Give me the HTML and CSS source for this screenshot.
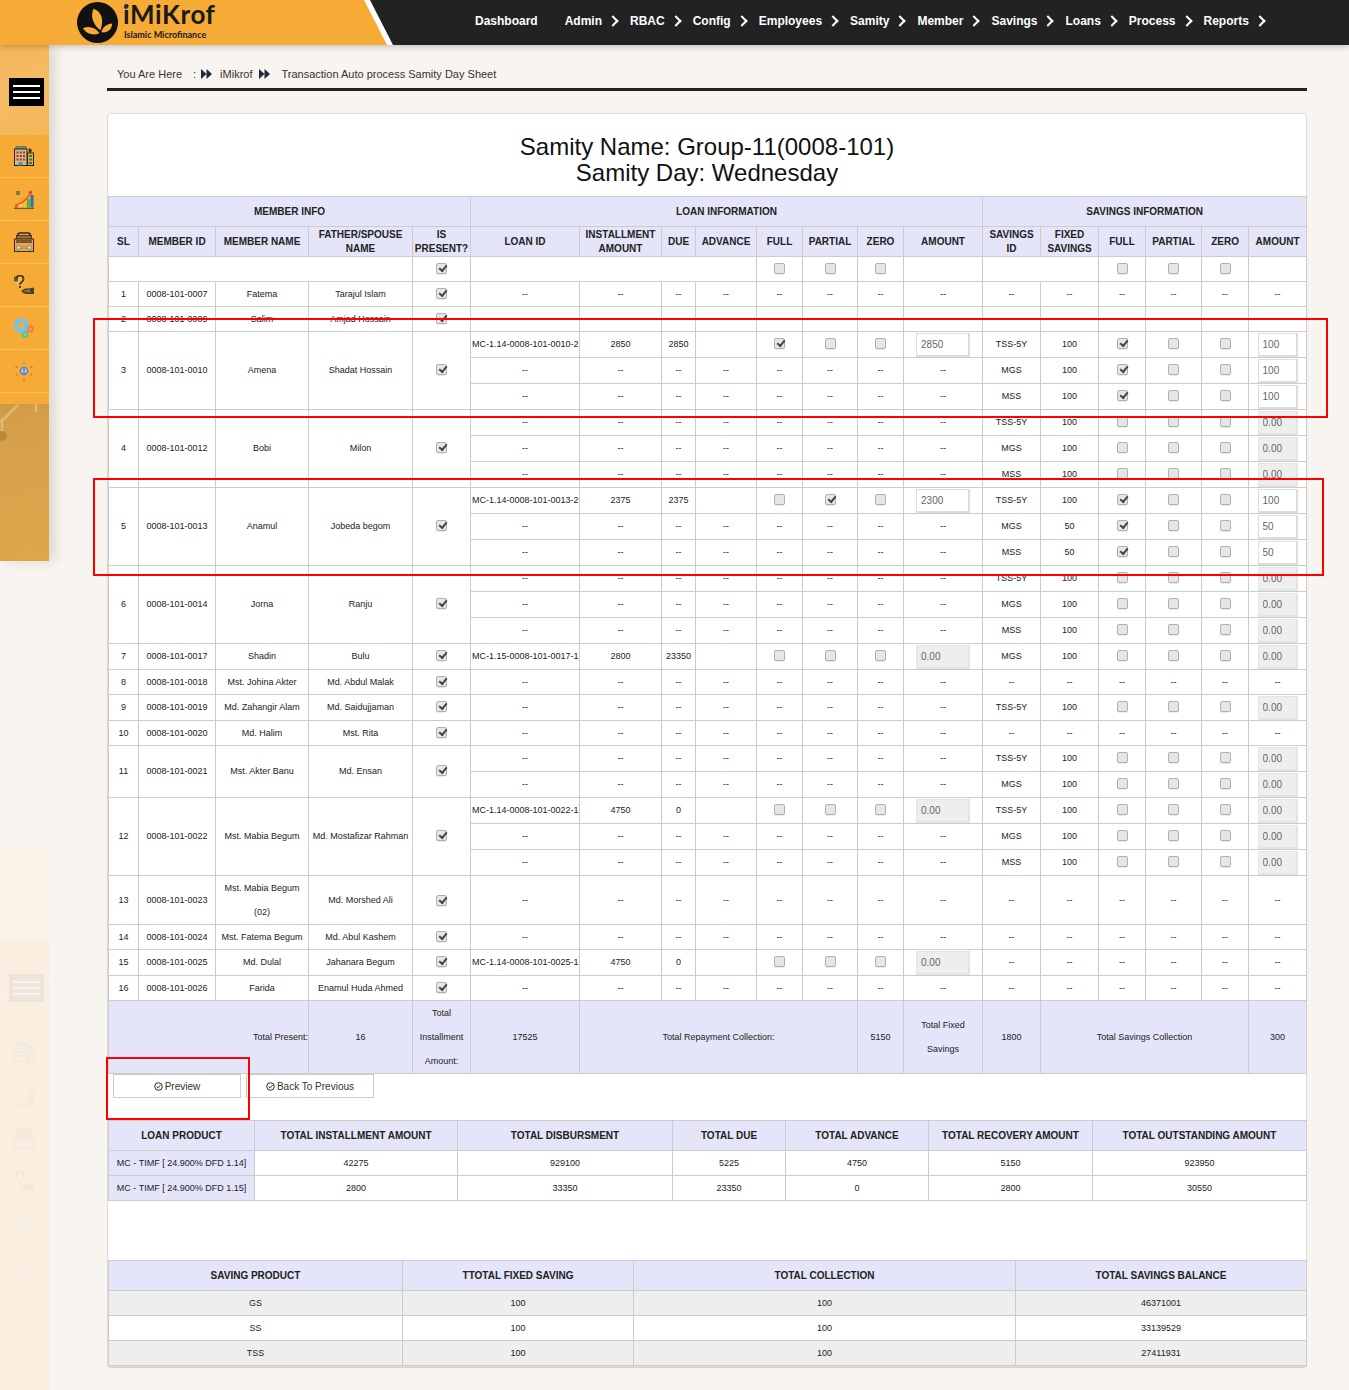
FILE: index.html
```html
<!DOCTYPE html>
<html lang="en">
<head>
  <meta charset="UTF-8">
  <title>Transaction Auto process Samity Day Sheet</title>
  <link rel="stylesheet" href="styles.css">
</head>
<body>
  <svg class="defs" width="0" height="0">
    <symbol id="i-building" viewBox="0 0 20 20">
      <rect x="2" y="0.5" width="10" height="3" fill="#2fa7a0" stroke="#a33" stroke-width=".6"/>
      <rect x="0.5" y="3" width="12.5" height="16.5" fill="#e4b183" stroke="#222"/>
      <path d="M2.5 5.5h2v2h-2zM5.8 5.5h2v2h-2zM9 5.5h2v2H9zM2.5 9h2v2h-2zM5.8 9h2v2h-2zM9 9h2v2H9zM2.5 12.5h2v2h-2zM5.8 12.5h2v2h-2zM9 12.5h2v2H9z" fill="#7a4a3a"/>
      <path d="M4.5 16h4v3.5h-4z" fill="#2fa7a0"/>
      <rect x="13.5" y="7" width="6" height="12.5" fill="#dcb43a" stroke="#222"/>
      <path d="M15 9h3v2h-3zM15 12.5h3v2h-3zM15 16h3v2h-3z" fill="#3c6e5a"/>
      <path d="M15 2l3 2-1 2.5h-2.500z" fill="#3a2c2c"/>
    </symbol>
    <symbol id="i-chart" viewBox="0 0 20 20">
      <rect x="2" y="2" width="4" height="4" fill="#8a7448"/>
      <path d="M1 16.500h2.500v2H1z" fill="#e53935"/>
      <rect x="5" y="15" width="3" height="3.500" fill="#f7d64a"/>
      <rect x="9" y="12.500" width="3" height="6" fill="#f2c230"/>
      <rect x="13" y="10" width="3" height="8.500" fill="#4caf50"/>
      <rect x="16.500" y="6" width="3" height="12.500" fill="#1e78b4"/>
      <path d="M1.500 16c6-1 11-5 15-12" fill="none" stroke="#e53935" stroke-width="1.200"/>
      <path d="M14 3l4-1.500-.3 4.500z" fill="#e53935"/>
      <rect y="18.800" width="20" height="1.200" fill="#6d5a36"/>
    </symbol>
    <symbol id="i-toolbox" viewBox="0 0 20 20">
      <path d="M4 6V2.500C4 1.500 5 1 6 1h8c1 0 2 .5 2 1.500V6" fill="none" stroke="#2b2b2b" stroke-width="1.500"/>
      <rect x="2.500" y="3.500" width="15" height="5" fill="#a0683a" stroke="#2b2b2b" stroke-width=".8"/>
      <rect x="0.500" y="7" width="19" height="12.500" fill="#e8a83c" stroke="#2b2b2b"/>
      <rect x="2" y="7.500" width="16" height="3.500" fill="#7e5230"/>
      <path d="M3 13.500h2l1 1.500h8l1-1.500h2v4h-2l-1-1.500H6l-1 1.500H3z" fill="#dfe3e8" stroke="#555" stroke-width=".5"/>
    </symbol>
    <symbol id="i-hands" viewBox="0 0 20 20">
      <circle cx="6" cy="5" r="5.500" fill="#f2bc4e"/>
      <path d="M0 1.500h4v5H0z" fill="#6b5a34"/>
      <path d="M2.500 4a3.500 3.500 0 1 1 5.300 3c-1.500.9-1.800 1.400-1.800 2.800" fill="none" stroke="#4a3c22" stroke-width="2"/>
      <rect x="5" y="11" width="2" height="2" fill="#4a3c22"/>
      <path d="M7 16l4-2.500h3l6-1V19h-7l-3-.5z" fill="#4e4226"/>
      <path d="M10.500 16h4M15 14.500v3" stroke="#e8c88a" stroke-width=".7"/>
    </symbol>
    <symbol id="i-gears" viewBox="0 0 20 20">
      <circle cx="7" cy="7.500" r="5" fill="none" stroke="#6cc5f2" stroke-width="3.500"/>
      <circle cx="7" cy="7.500" r="7" fill="none" stroke="#6cc5f2" stroke-width="1.500" stroke-dasharray="2.200 1.500"/>
      <circle cx="16.500" cy="11" r="2.500" fill="none" stroke="#f4775a" stroke-width="1.800"/>
      <circle cx="11" cy="16.500" r="2.500" fill="none" stroke="#3dcab4" stroke-width="1.800"/>
    </symbol>
    <symbol id="i-team" viewBox="0 0 20 20">
      <circle cx="10" cy="10" r="3.600" fill="#f6c9a0" stroke="#3b87e0" stroke-width="1.500"/>
      <path d="M8 12.500a2 2 0 0 1 4 0zM8.700 8.800a1.300 1.300 0 1 0 2.600 0 1.300 1.300 0 0 0-2.600 0z" fill="#3b87e0"/>
      <path d="M8.500 3l1.500-2.500L11.500 3zM8.500 19.500l1.500-2.500 1.500 2.500z" fill="#f2665a"/>
      <path d="M1 7l1.500-2.500L4 7zM16 7l1.500-2.500L19 7zM1 14.500L2.500 12 4 14.500zM16 14.500l1.500-2.500 1.500 2.500z" fill="#f2665a"/>
    </symbol>
    <symbol id="i-forward" viewBox="0 0 11 10">
      <path d="M0 0l5.500 5L0 10zM5.500 0L11 5l-5.500 5z" fill="#1f2a3a"/>
    </symbol>
    <symbol id="i-check" viewBox="0 0 10 10">
      <circle cx="5" cy="5" r="4.200" fill="none" stroke="#222" stroke-width="1.100"/>
      <path d="M2.900 5l1.600 1.500 2.700-3" fill="none" stroke="#222" stroke-width="1.100"/>
    </symbol>
  </svg>

  <header class="topbar">
    <div class="brand">
      <div class="brand-in">
        <svg class="logo" viewBox="0 0 42 42">
          <circle cx="21" cy="21" r="21" fill="#111"/>
          <path d="M17 7c8 3 11 11 7 22C17 24 13 15 17 7z" fill="#f5ab35"/>
          <path d="M6 27c6-3 13-1 17 5-6 3-13 1-17-5zM25 31c1-5 6-9 11-9 0 6-5 10-11 9z" fill="#f5ab35"/>
        </svg>
        <div class="brand-text">
          <div class="brand-name">iMiKrof</div>
          <div class="brand-sub">Islamic Microfinance</div>
        </div>
      </div>
    </div>
    <nav class="nav">
      <a class="nav-first">Dashboard</a>
      <a class="sub">Admin</a>
      <a class="sub">RBAC</a>
      <a class="sub">Config</a>
      <a class="sub">Employees</a>
      <a class="sub">Samity</a>
      <a class="sub">Member</a>
      <a class="sub">Savings</a>
      <a class="sub">Loans</a>
      <a class="sub">Process</a>
      <a class="sub">Reports</a>
    </nav>
  </header>

  <aside class="side">
    <div class="side-top"><div class="burger"><span></span><span></span><span></span></div></div>
    <div class="side-item"><svg class="side-icon"><use href="#i-building"/></svg></div>
    <div class="side-item"><svg class="side-icon"><use href="#i-chart"/></svg></div>
    <div class="side-item"><svg class="side-icon"><use href="#i-toolbox"/></svg></div>
    <div class="side-item"><svg class="side-icon"><use href="#i-hands"/></svg></div>
    <div class="side-item"><svg class="side-icon"><use href="#i-gears"/></svg></div>
    <div class="side-item"><svg class="side-icon"><use href="#i-team"/></svg></div>
    <div class="side-gap"></div>
    <div class="side-photo">
      <svg class="photo-art" viewBox="0 0 49 157">
        <path d="M0 18C6 14 10 8 18 1M2 14v14M36 0v8" fill="none" stroke="#e9c584" stroke-width="2.500"/>
        <circle cx="2" cy="32" r="5" fill="#b17f34"/>
      </svg>
    </div>
  </aside>

  <div class="ghost-band"></div>
  <aside class="side side-ghost">
    <div class="side-top"><div class="burger"><span></span><span></span><span></span></div></div>
    <div class="side-item"><svg class="side-icon"><use href="#i-building"/></svg></div>
    <div class="side-item"><svg class="side-icon"><use href="#i-chart"/></svg></div>
    <div class="side-item"><svg class="side-icon"><use href="#i-toolbox"/></svg></div>
    <div class="side-item"><svg class="side-icon"><use href="#i-hands"/></svg></div>
    <div class="side-item"><svg class="side-icon"><use href="#i-gears"/></svg></div>
    <div class="side-item"><svg class="side-icon"><use href="#i-team"/></svg></div>
  </aside>

  <main class="main">
    <div class="crumbs">
      <span>You Are Here</span>
      <span class="crumb-colon">:</span>
      <svg class="crumb-arrow"><use href="#i-forward"/></svg>
      <span class="crumb-home">iMikrof</span>
      <svg class="crumb-arrow"><use href="#i-forward"/></svg>
      <span class="crumb-last">Transaction Auto process Samity Day Sheet</span>
    </div>

    <section class="card">
      <h1 class="title">Samity Name: Group-11(0008-101)<br>Samity Day: Wednesday</h1>

      <table class="grid sheet">
        <colgroup>
          <col class="c30"><col class="c77"><col class="c93"><col class="c104"><col class="c58">
          <col class="c109"><col class="c82"><col class="c34"><col class="c61"><col class="c46"><col class="c55"><col class="c46"><col class="c79">
          <col class="c58"><col class="c58"><col class="c47"><col class="c56"><col class="c47"><col class="c58">
        </colgroup>
        <thead>
          <tr><th colspan="5">MEMBER INFO</th><th colspan="8">LOAN INFORMATION</th><th colspan="6">SAVINGS INFORMATION</th></tr>
          <tr>
            <th>SL</th><th>MEMBER ID</th><th>MEMBER NAME</th><th>FATHER/SPOUSE NAME</th><th>IS PRESENT?</th>
            <th>LOAN ID</th><th>INSTALLMENT AMOUNT</th><th>DUE</th><th>ADVANCE</th><th>FULL</th><th>PARTIAL</th><th>ZERO</th><th>AMOUNT</th>
            <th>SAVINGS ID</th><th>FIXED SAVINGS</th><th>FULL</th><th>PARTIAL</th><th>ZERO</th><th>AMOUNT</th>
          </tr>
        </thead>
        <tbody>
          <tr><td colspan="4"></td><td><input type="checkbox" checked></td><td colspan="4"></td><td><input type="checkbox"></td><td><input type="checkbox"></td><td><input type="checkbox"></td><td></td><td colspan="2"></td><td><input type="checkbox"></td><td><input type="checkbox"></td><td><input type="checkbox"></td><td></td></tr>

          <tr><td>1</td><td>0008-101-0007</td><td>Fatema</td><td>Tarajul Islam</td><td><input type="checkbox" checked></td><td>--</td><td>--</td><td>--</td><td>--</td><td>--</td><td>--</td><td>--</td><td>--</td><td>--</td><td>--</td><td>--</td><td>--</td><td>--</td><td>--</td></tr>
          <tr><td>2</td><td>0008-101-0009</td><td>Salim</td><td>Amjad Hossain</td><td><input type="checkbox" checked></td><td>--</td><td>--</td><td>--</td><td>--</td><td>--</td><td>--</td><td>--</td><td>--</td><td>--</td><td>--</td><td>--</td><td>--</td><td>--</td><td>--</td></tr>

          <tr><td rowspan="3">3</td><td rowspan="3">0008-101-0010</td><td rowspan="3">Amena</td><td rowspan="3">Shadat Hossain</td><td rowspan="3"><input type="checkbox" checked></td><td class="loan">MC-1.14-0008-101-0010-2</td><td>2850</td><td>2850</td><td></td><td><input type="checkbox" checked></td><td><input type="checkbox"></td><td><input type="checkbox"></td><td><input class="amt" value="2850"></td><td>TSS-5Y</td><td>100</td><td><input type="checkbox" checked></td><td><input type="checkbox"></td><td><input type="checkbox"></td><td><input class="amt-s" value="100"></td></tr>
          <tr><td>--</td><td>--</td><td>--</td><td>--</td><td>--</td><td>--</td><td>--</td><td>--</td><td>MGS</td><td>100</td><td><input type="checkbox" checked></td><td><input type="checkbox"></td><td><input type="checkbox"></td><td><input class="amt-s" value="100"></td></tr>
          <tr><td>--</td><td>--</td><td>--</td><td>--</td><td>--</td><td>--</td><td>--</td><td>--</td><td>MSS</td><td>100</td><td><input type="checkbox" checked></td><td><input type="checkbox"></td><td><input type="checkbox"></td><td><input class="amt-s" value="100"></td></tr>

          <tr><td rowspan="3">4</td><td rowspan="3">0008-101-0012</td><td rowspan="3">Bobi</td><td rowspan="3">Milon</td><td rowspan="3"><input type="checkbox" checked></td><td>--</td><td>--</td><td>--</td><td>--</td><td>--</td><td>--</td><td>--</td><td>--</td><td>TSS-5Y</td><td>100</td><td><input type="checkbox"></td><td><input type="checkbox"></td><td><input type="checkbox"></td><td><input class="amt-s off" value="0.00"></td></tr>
          <tr><td>--</td><td>--</td><td>--</td><td>--</td><td>--</td><td>--</td><td>--</td><td>--</td><td>MGS</td><td>100</td><td><input type="checkbox"></td><td><input type="checkbox"></td><td><input type="checkbox"></td><td><input class="amt-s off" value="0.00"></td></tr>
          <tr><td>--</td><td>--</td><td>--</td><td>--</td><td>--</td><td>--</td><td>--</td><td>--</td><td>MSS</td><td>100</td><td><input type="checkbox"></td><td><input type="checkbox"></td><td><input type="checkbox"></td><td><input class="amt-s off" value="0.00"></td></tr>

          <tr><td rowspan="3">5</td><td rowspan="3">0008-101-0013</td><td rowspan="3">Anamul</td><td rowspan="3">Jobeda begom</td><td rowspan="3"><input type="checkbox" checked></td><td class="loan">MC-1.14-0008-101-0013-2</td><td>2375</td><td>2375</td><td></td><td><input type="checkbox"></td><td><input type="checkbox" checked></td><td><input type="checkbox"></td><td><input class="amt" value="2300"></td><td>TSS-5Y</td><td>100</td><td><input type="checkbox" checked></td><td><input type="checkbox"></td><td><input type="checkbox"></td><td><input class="amt-s" value="100"></td></tr>
          <tr><td>--</td><td>--</td><td>--</td><td>--</td><td>--</td><td>--</td><td>--</td><td>--</td><td>MGS</td><td>50</td><td><input type="checkbox" checked></td><td><input type="checkbox"></td><td><input type="checkbox"></td><td><input class="amt-s" value="50"></td></tr>
          <tr><td>--</td><td>--</td><td>--</td><td>--</td><td>--</td><td>--</td><td>--</td><td>--</td><td>MSS</td><td>50</td><td><input type="checkbox" checked></td><td><input type="checkbox"></td><td><input type="checkbox"></td><td><input class="amt-s" value="50"></td></tr>

          <tr><td rowspan="3">6</td><td rowspan="3">0008-101-0014</td><td rowspan="3">Jorna</td><td rowspan="3">Ranju</td><td rowspan="3"><input type="checkbox" checked></td><td>--</td><td>--</td><td>--</td><td>--</td><td>--</td><td>--</td><td>--</td><td>--</td><td>TSS-5Y</td><td>100</td><td><input type="checkbox"></td><td><input type="checkbox"></td><td><input type="checkbox"></td><td><input class="amt-s off" value="0.00"></td></tr>
          <tr><td>--</td><td>--</td><td>--</td><td>--</td><td>--</td><td>--</td><td>--</td><td>--</td><td>MGS</td><td>100</td><td><input type="checkbox"></td><td><input type="checkbox"></td><td><input type="checkbox"></td><td><input class="amt-s off" value="0.00"></td></tr>
          <tr><td>--</td><td>--</td><td>--</td><td>--</td><td>--</td><td>--</td><td>--</td><td>--</td><td>MSS</td><td>100</td><td><input type="checkbox"></td><td><input type="checkbox"></td><td><input type="checkbox"></td><td><input class="amt-s off" value="0.00"></td></tr>

          <tr><td>7</td><td>0008-101-0017</td><td>Shadin</td><td>Bulu</td><td><input type="checkbox" checked></td><td class="loan">MC-1.15-0008-101-0017-1</td><td>2800</td><td>23350</td><td></td><td><input type="checkbox"></td><td><input type="checkbox"></td><td><input type="checkbox"></td><td><input class="amt off" value="0.00"></td><td>MGS</td><td>100</td><td><input type="checkbox"></td><td><input type="checkbox"></td><td><input type="checkbox"></td><td><input class="amt-s off" value="0.00"></td></tr>
          <tr><td>8</td><td>0008-101-0018</td><td>Mst. Johina Akter</td><td>Md. Abdul Malak</td><td><input type="checkbox" checked></td><td>--</td><td>--</td><td>--</td><td>--</td><td>--</td><td>--</td><td>--</td><td>--</td><td>--</td><td>--</td><td>--</td><td>--</td><td>--</td><td>--</td></tr>
          <tr><td>9</td><td>0008-101-0019</td><td>Md. Zahangir Alam</td><td>Md. Saidujjaman</td><td><input type="checkbox" checked></td><td>--</td><td>--</td><td>--</td><td>--</td><td>--</td><td>--</td><td>--</td><td>--</td><td>TSS-5Y</td><td>100</td><td><input type="checkbox"></td><td><input type="checkbox"></td><td><input type="checkbox"></td><td><input class="amt-s off" value="0.00"></td></tr>
          <tr><td>10</td><td>0008-101-0020</td><td>Md. Halim</td><td>Mst. Rita</td><td><input type="checkbox" checked></td><td>--</td><td>--</td><td>--</td><td>--</td><td>--</td><td>--</td><td>--</td><td>--</td><td>--</td><td>--</td><td>--</td><td>--</td><td>--</td><td>--</td></tr>

          <tr><td rowspan="2">11</td><td rowspan="2">0008-101-0021</td><td rowspan="2">Mst. Akter Banu</td><td rowspan="2">Md. Ensan</td><td rowspan="2"><input type="checkbox" checked></td><td>--</td><td>--</td><td>--</td><td>--</td><td>--</td><td>--</td><td>--</td><td>--</td><td>TSS-5Y</td><td>100</td><td><input type="checkbox"></td><td><input type="checkbox"></td><td><input type="checkbox"></td><td><input class="amt-s off" value="0.00"></td></tr>
          <tr><td>--</td><td>--</td><td>--</td><td>--</td><td>--</td><td>--</td><td>--</td><td>--</td><td>MGS</td><td>100</td><td><input type="checkbox"></td><td><input type="checkbox"></td><td><input type="checkbox"></td><td><input class="amt-s off" value="0.00"></td></tr>

          <tr><td rowspan="3">12</td><td rowspan="3">0008-101-0022</td><td rowspan="3">Mst. Mabia Begum</td><td rowspan="3">Md. Mostafizar Rahman</td><td rowspan="3"><input type="checkbox" checked></td><td class="loan">MC-1.14-0008-101-0022-1</td><td>4750</td><td>0</td><td></td><td><input type="checkbox"></td><td><input type="checkbox"></td><td><input type="checkbox"></td><td><input class="amt off" value="0.00"></td><td>TSS-5Y</td><td>100</td><td><input type="checkbox"></td><td><input type="checkbox"></td><td><input type="checkbox"></td><td><input class="amt-s off" value="0.00"></td></tr>
          <tr><td>--</td><td>--</td><td>--</td><td>--</td><td>--</td><td>--</td><td>--</td><td>--</td><td>MGS</td><td>100</td><td><input type="checkbox"></td><td><input type="checkbox"></td><td><input type="checkbox"></td><td><input class="amt-s off" value="0.00"></td></tr>
          <tr><td>--</td><td>--</td><td>--</td><td>--</td><td>--</td><td>--</td><td>--</td><td>--</td><td>MSS</td><td>100</td><td><input type="checkbox"></td><td><input type="checkbox"></td><td><input type="checkbox"></td><td><input class="amt-s off" value="0.00"></td></tr>

          <tr class="mid"><td>13</td><td>0008-101-0023</td><td>Mst. Mabia Begum (02)</td><td>Md. Morshed Ali</td><td><input type="checkbox" checked></td><td>--</td><td>--</td><td>--</td><td>--</td><td>--</td><td>--</td><td>--</td><td>--</td><td>--</td><td>--</td><td>--</td><td>--</td><td>--</td><td>--</td></tr>
          <tr><td>14</td><td>0008-101-0024</td><td>Mst. Fatema Begum</td><td>Md. Abul Kashem</td><td><input type="checkbox" checked></td><td>--</td><td>--</td><td>--</td><td>--</td><td>--</td><td>--</td><td>--</td><td>--</td><td>--</td><td>--</td><td>--</td><td>--</td><td>--</td><td>--</td></tr>
          <tr><td>15</td><td>0008-101-0025</td><td>Md. Dulal</td><td>Jahanara Begum</td><td><input type="checkbox" checked></td><td class="loan">MC-1.14-0008-101-0025-1</td><td>4750</td><td>0</td><td></td><td><input type="checkbox"></td><td><input type="checkbox"></td><td><input type="checkbox"></td><td><input class="amt off" value="0.00"></td><td>--</td><td>--</td><td>--</td><td>--</td><td>--</td><td>--</td></tr>
          <tr><td>16</td><td>0008-101-0026</td><td>Farida</td><td>Enamul Huda Ahmed</td><td><input type="checkbox" checked></td><td>--</td><td>--</td><td>--</td><td>--</td><td>--</td><td>--</td><td>--</td><td>--</td><td>--</td><td>--</td><td>--</td><td>--</td><td>--</td><td>--</td></tr>

          <tr class="mid totals">
            <td colspan="3" class="right">Total Present:</td><td>16</td><td>Total Installment Amount:</td><td>17525</td>
            <td colspan="5">Total Repayment Collection:</td><td>5150</td><td>Total Fixed<br>Savings</td><td>1800</td>
            <td colspan="4">Total Savings Collection</td><td>300</td>
          </tr>
        </tbody>
      </table>

      <div class="actions">
        <button class="btn"><svg class="btn-icon"><use href="#i-check"/></svg>Preview</button>
        <button class="btn"><svg class="btn-icon"><use href="#i-check"/></svg>Back To Previous</button>
      </div>

      <table class="grid loans">
        <colgroup><col class="c146"><col class="c203"><col class="c215"><col class="c113"><col class="c143"><col class="c164"><col class="c214"></colgroup>
        <thead>
          <tr><th>LOAN PRODUCT</th><th>TOTAL INSTALLMENT AMOUNT</th><th>TOTAL DISBURSMENT</th><th>TOTAL DUE</th><th>TOTAL ADVANCE</th><th>TOTAL RECOVERY AMOUNT</th><th>TOTAL OUTSTANDING AMOUNT</th></tr>
        </thead>
        <tbody>
          <tr><td class="tint">MC - TIMF [ 24.900% DFD 1.14]</td><td>42275</td><td>929100</td><td>5225</td><td>4750</td><td>5150</td><td>923950</td></tr>
          <tr><td class="tint">MC - TIMF [ 24.900% DFD 1.15]</td><td>2800</td><td>33350</td><td>23350</td><td>0</td><td>2800</td><td>30550</td></tr>
        </tbody>
      </table>

      <table class="grid savings">
        <colgroup><col class="c294"><col class="c231"><col class="c382"><col class="c291"></colgroup>
        <thead>
          <tr><th>SAVING PRODUCT</th><th>TTOTAL FIXED SAVING</th><th>TOTAL COLLECTION</th><th>TOTAL SAVINGS BALANCE</th></tr>
        </thead>
        <tbody>
          <tr class="odd"><td>GS</td><td>100</td><td>100</td><td>46371001</td></tr>
          <tr><td>SS</td><td>100</td><td>100</td><td>33139529</td></tr>
          <tr class="odd"><td>TSS</td><td>100</td><td>100</td><td>27411931</td></tr>
        </tbody>
      </table>
    </section>
  </main>

  <div class="mark mark-a"></div>
  <div class="mark mark-b"></div>
  <div class="mark mark-c"></div>
</body>
</html>
```

FILE: styles.css
```css
*{
  margin: 0;
  padding: 0;
  box-sizing: border-box;
}

html, body{
  height: 1390px;
  overflow: hidden;
}

body{
  position: relative;
  background: #f8f5f0;
  font-family: "Liberation Sans", Arial, sans-serif;
  color: #222;
}

.defs{
  position: absolute;
}

/* top bar */
.topbar{
  display: flex;
  height: 45px;
  background: #222;
  box-shadow: 0 2px 6px rgba(0,0,0,0.2);
  position: relative;
  z-index: 3;
}

.brand{
  width: 393px;
  background: #fff;
  clip-path: polygon(0 0, 370px 0, 393px 100%, 0 100%);
}

.brand-in{
  display: flex;
  align-items: center;
  height: 45px;
  padding-left: 77px;
  background: #f5ab35;
  clip-path: polygon(0 0, 364px 0, 387px 100%, 0 100%);
}

.logo{
  width: 41px;
  height: 41px;
}

.brand-text{
  margin: -2px 0 0 5px;
  color: #1a1a1a;
}

.brand-name{
  font-family: Lato, sans-serif;
  font-size: 26px;
  font-weight: 700;
  line-height: 22px;
  letter-spacing: 0.6px;
  position: relative;
}

.brand-name::before{
  content: '';
  position: absolute;
  left: 1px;
  top: 2px;
  width: 4px;
  height: 4px;
  border-radius: 50%;
  background: #1c2a80;
}

.brand-sub{
  font-family: Lato, sans-serif;
  font-size: 9px;
  font-weight: 700;
  line-height: 10px;
  margin: 5px 0 0 1px;
}

.nav{
  display: flex;
  align-items: center;
  padding: 0 0 4px 82px;
  font-size: 12px;
  font-weight: bold;
  color: #fff;
}

.nav a{
  display: flex;
  align-items: center;
  margin-right: 12px;
}

.nav .nav-first{
  margin-right: 27px;
}

.nav .sub::after{
  content: '';
  width: 6px;
  height: 6px;
  margin-left: 7px;
  margin-right: 1px;
  border-top: 2px solid #fff;
  border-right: 2px solid #fff;
  transform: rotate(45deg);
}

/* left bar, lies over the page */
.side{
  position: absolute;
  left: 0;
  top: 45px;
  width: 49px;
  height: 516px;
  z-index: 2;
  background: #f5ab35;
  box-shadow: 6px 0 12px rgba(0,0,0,0.12);
}

.side-top{
  height: 90px;
  padding: 33px 0 0 9px;
  background: linear-gradient(160deg, #f4b658, #f5bc66 50%, #f4b658);
}

.burger{
  display: flex;
  flex-direction: column;
  justify-content: center;
  gap: 4px;
  width: 35px;
  height: 28px;
  padding: 0 4px;
  background: #000;
}

.burger span{
  display: block;
  height: 2px;
  background: #fff;
}

.side-item{
  height: 43px;
  padding: 11px 0 0 14px;
  border-bottom: 1px solid #f8c64f;
}

.side-icon{
  display: block;
  width: 20px;
  height: 20px;
}

.side-gap{
  height: 11px;
}

.side-photo{
  height: 157px;
  background: linear-gradient(170deg, #cf9a45, #d59f4a 12%, #daa24b 50%, #dfa549);
}

.photo-art{
  display: block;
  width: 49px;
  height: 157px;
  opacity: 0.7;
}

.side-ghost{
  top: 941px;
  height: 449px;
  opacity: 0.05;
  box-shadow: none;
}

.ghost-band{
  position: absolute;
  left: 0;
  top: 849px;
  width: 49px;
  height: 541px;
  background: #fbf2e8;
}

/* page */
.main{
  width: 1200px;
  margin-left: 107px;
  position: relative;
}

.crumbs{
  display: flex;
  align-items: center;
  height: 46px;
  padding: 14px 0 0 10px;
  border-bottom: 3px solid #222;
  font-size: 11px;
  color: #333;
}

.crumb-colon{
  margin-left: 11px;
}

.crumb-arrow{
  width: 11px;
  height: 10px;
  margin: 0 8px 0 5px;
}

.crumb-home{
  margin-right: 2px;
}

.crumb-last{
  margin-left: 3px;
}

.card{
  margin-top: 22px;
  height: 1254px;
  background: #fff;
  border: 1px solid #ddd;
  border-radius: 4px;
  box-shadow: 0 1px 1px rgba(0,0,0,0.15);
}

.title{
  padding: 20px 0 10px;
  font-size: 24px;
  font-weight: normal;
  line-height: 26px;
  text-align: center;
  color: #111;
}

/* tables */
.grid{
  width: 1198px;
  table-layout: fixed;
  border-collapse: collapse;
  font-size: 9px;
}

.grid th, .grid td{
  border: 1px solid #ccc;
  text-align: center;
  vertical-align: middle;
}

.grid th{
  height: 30px;
  line-height: 14px;
  font-size: 10px;
  font-weight: bold;
  background: #e4e5f8;
}

.grid td{
  height: 25px;
  line-height: 24px;
}

/* rows that hold an input are 1px taller, their text stays at the top */
.sheet td{
  vertical-align: top;
}

.sheet td[rowspan], .sheet .mid td{
  vertical-align: middle;
}

.sheet td[rowspan]{
  padding-bottom: 2px;
}

.sheet td.loan{
  text-align: left;
  padding-left: 1px;
  white-space: nowrap;
}

.totals td{
  background: #e4e5f8;
}

.sheet .totals td.right{
  text-align: right;
}

.c30{ width: 30px; }
.c34{ width: 34px; }
.c46{ width: 46px; }
.c47{ width: 47px; }
.c55{ width: 55px; }
.c56{ width: 56px; }
.c58{ width: 58px; }
.c61{ width: 61px; }
.c77{ width: 77px; }
.c79{ width: 79px; }
.c82{ width: 82px; }
.c93{ width: 93px; }
.c104{ width: 104px; }
.c109{ width: 109px; }
.c113{ width: 113px; }
.c143{ width: 143px; }
.c146{ width: 146px; }
.c164{ width: 164px; }
.c203{ width: 203px; }
.c214{ width: 214px; }
.c215{ width: 215px; }
.c231{ width: 231px; }
.c291{ width: 291px; }
.c294{ width: 294px; }
.c382{ width: 382px; }

input[type="checkbox"]{
  -webkit-appearance: none;
  appearance: none;
  display: block;
  position: relative;
  width: 11px;
  height: 11px;
  margin: 6px auto 0;
  background: #e6e6e6;
  border: 1px solid #b0b0b0;
  border-radius: 2px;
  box-shadow: 0 1px 0 rgba(0,0,0,0.08);
}

.sheet td[rowspan] input[type="checkbox"], .sheet .mid input[type="checkbox"]{
  margin-top: 0;
}

input[type="checkbox"]:checked::after{
  content: '';
  position: absolute;
  left: 2px;
  top: 1px;
  width: 6px;
  height: 3px;
  border-left: 2px solid #444;
  border-bottom: 2px solid #444;
  transform: rotate(-50deg);
}

.amt, .amt-s{
  display: block;
  height: 24px;
  margin: 1px auto 0;
  padding-left: 4px;
  background: #fff;
  border-style: solid;
  border-color: #ddd;
  border-width: 1px 2px 2px 1px;
  font-family: "Liberation Sans", Arial, sans-serif;
  font-size: 10px;
  color: #666;
}

.amt{
  width: 54px;
}

.amt-s{
  width: 40px;
}

.off{
  background: #eee;
  border-color: #e4e4e4;
}

/* buttons */
.actions{
  display: flex;
  gap: 5px;
  height: 46px;
  padding: 0 5px;
}

.btn{
  display: flex;
  align-items: center;
  justify-content: center;
  width: 128px;
  height: 24px;
  background: #fff;
  border: 1px solid #ccc;
  font-family: "Liberation Sans", Arial, sans-serif;
  font-size: 10px;
  color: #333;
}

.btn-icon{
  width: 9px;
  height: 9px;
  margin-right: 2px;
}

.tint{
  background: #e4e5f8;
}

.savings{
  margin-top: 59px;
}

.odd td{
  background: #eee;
}

/* red marks on top of the screenshot */
.mark{
  position: absolute;
  z-index: 4;
  border: 2px solid #f00;
}

.mark-a{
  left: 93px;
  top: 318px;
  width: 1235px;
  height: 100px;
}

.mark-b{
  left: 93px;
  top: 478px;
  width: 1231px;
  height: 98px;
}

.mark-c{
  left: 106px;
  top: 1057px;
  width: 144px;
  height: 63px;
}
```
